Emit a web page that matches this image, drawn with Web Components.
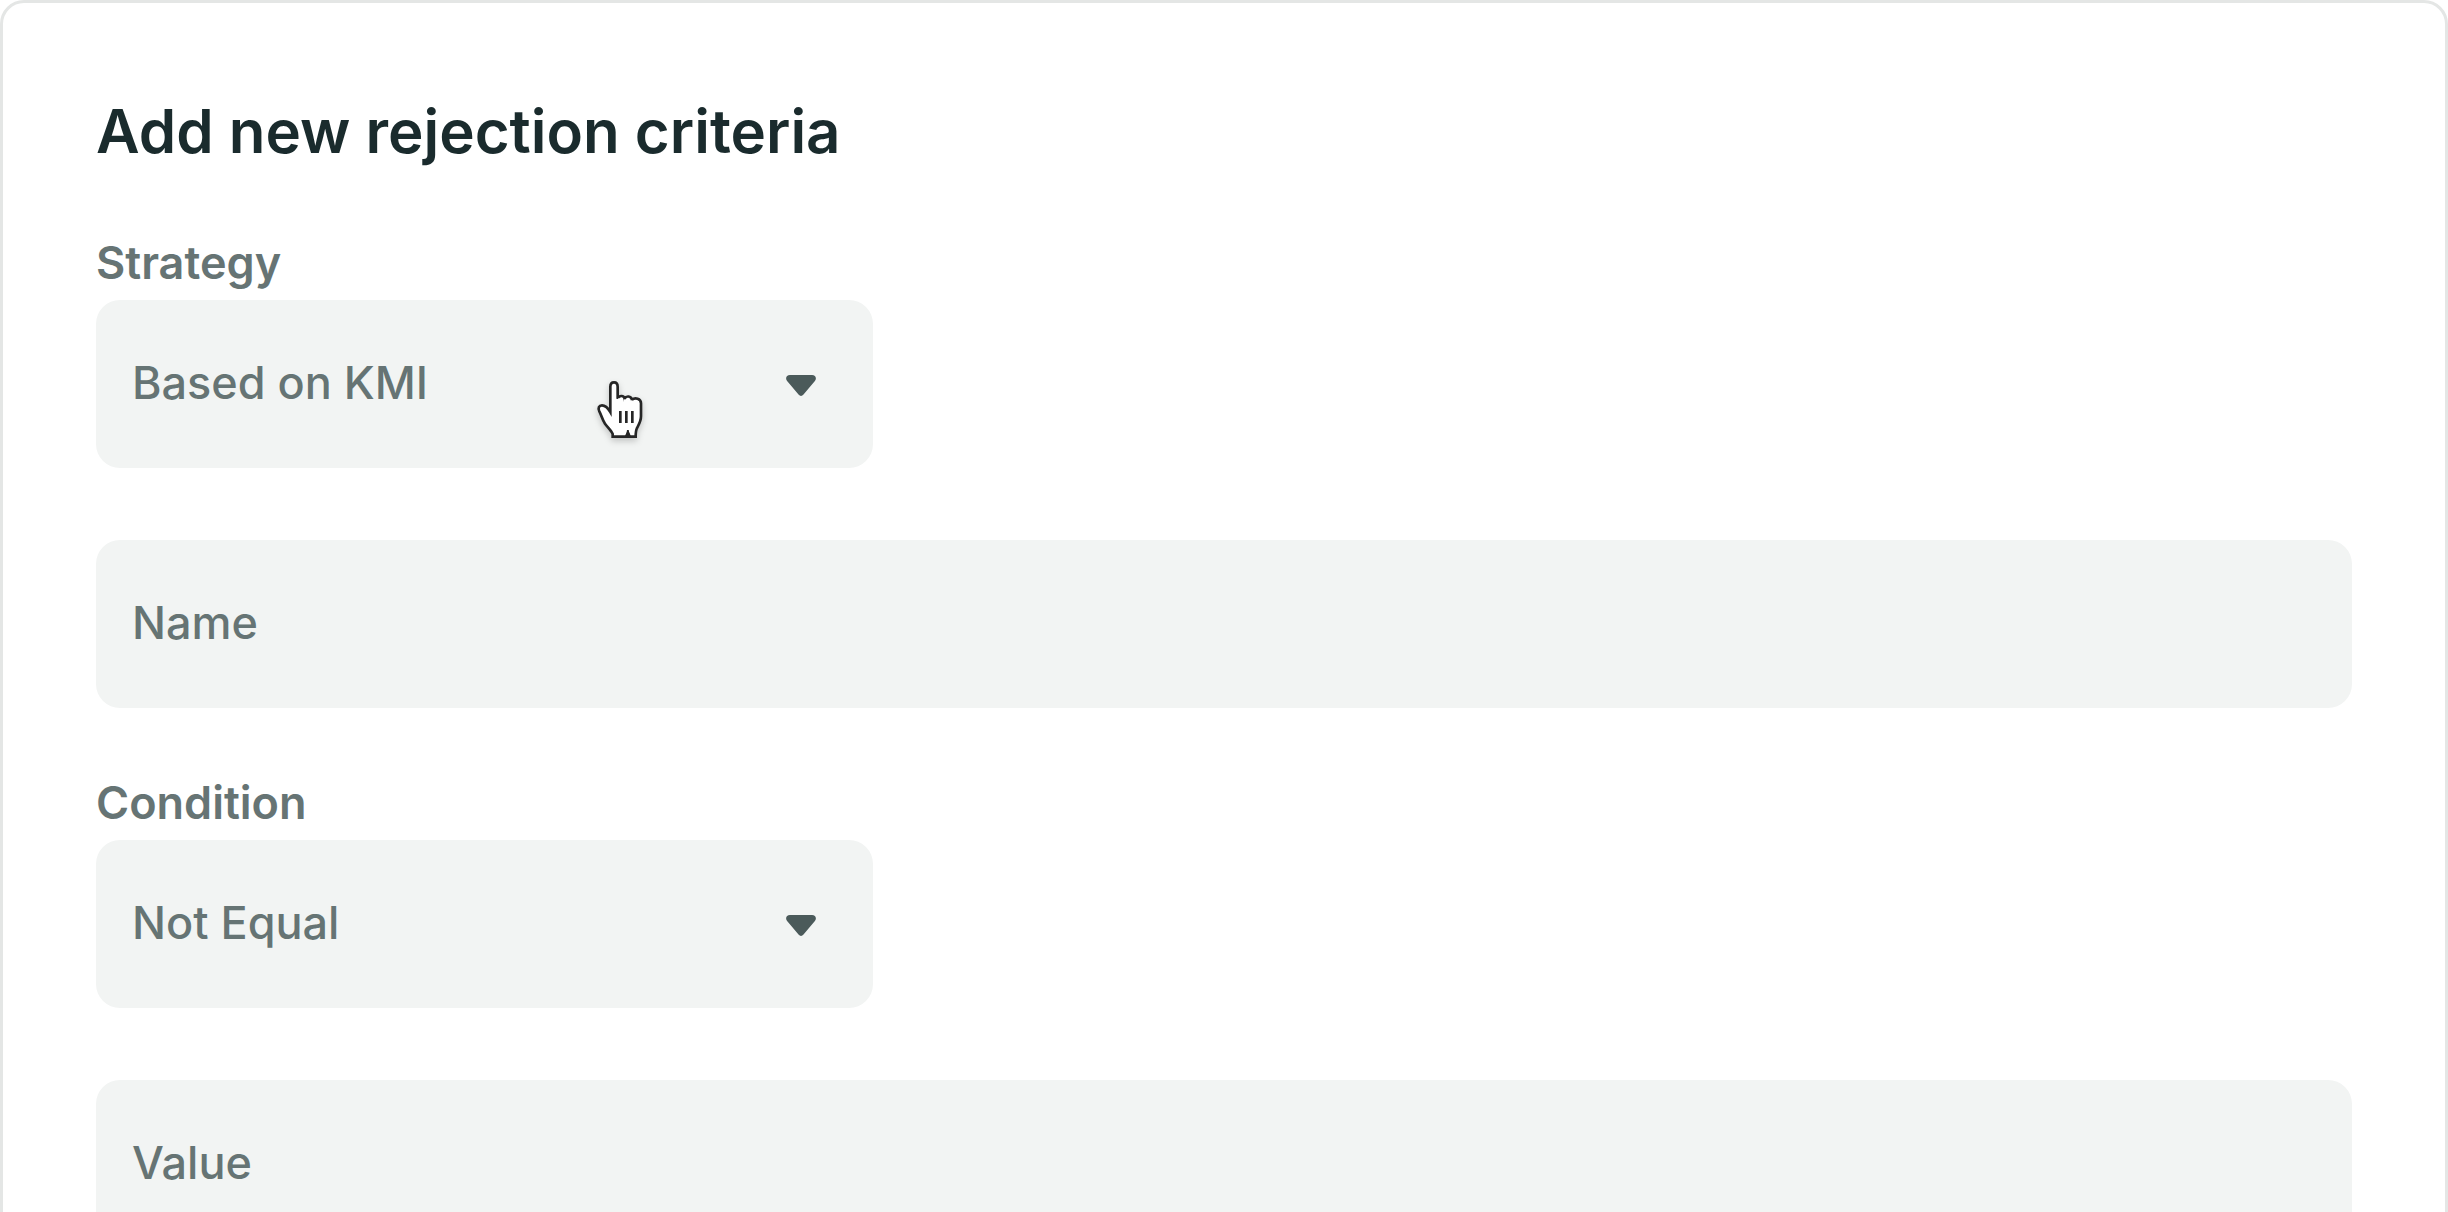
<!DOCTYPE html>
<html lang="en">
<head>
<meta charset="utf-8">
<title>Add new rejection criteria</title>
<style>
  html { height: 100%; overflow: hidden; background: #fff; }
  body {
    margin: 0;
    font-family: Inter, "Liberation Sans", sans-serif;
    --ink: #1a2b2d;
    --muted: #667474;
    --field: #f2f4f3;
    --line: #e4e6e5;
    --arrow: #4b5a5a;
  }
</style>
</head>
<body>
<criteria-card>
  <span slot="title">Add new rejection criteria</span>
  <select-field label="Strategy" options="Based on KMI|Based on value">
    <hand-pointer></hand-pointer>
  </select-field>
  <text-field label="Name"></text-field>
  <select-field label="Condition" options="Not Equal|Equal"></select-field>
  <text-field label="Value"></text-field>
</criteria-card>

<script>
class CriteriaCard extends HTMLElement {
  constructor() {
    super();
    this.attachShadow({ mode: "open" }).innerHTML = `
      <style>
        :host { display: block; }
        form {
          display: flex; flex-direction: column; gap: 72px;
          padding: 93px; border: 3px solid var(--line); border-radius: 24px; background: #fff;
        }
        h1 { margin: 0 0 2px; font-size: 60px; line-height: 70px; font-weight: 600; color: var(--ink); }
      </style>
      <form><h1><slot name="title"></slot></h1><slot></slot></form>`;
  }
}

class SelectField extends HTMLElement {
  connectedCallback() {
    if (this.shadowRoot) return;
    this.attachShadow({ mode: "open" }).innerHTML = `
      <style>
        :host { display: flex; flex-direction: column; align-items: flex-start; gap: 14px; }
        label { font-size: 45px; line-height: 46px; font-weight: 600; color: var(--muted); }
        .box { position: relative; display: grid; align-items: center; width: 777px; max-width: 100%; }
        select, svg { grid-area: 1 / 1; }
        select {
          appearance: none; box-sizing: border-box; width: 100%; height: 168px; margin: 0;
          padding: 0 93px 2px 36px; border: 0; border-radius: 24px; background: var(--field);
          font: 450 45px/60px Inter, "Liberation Sans", sans-serif; color: var(--muted); cursor: pointer;
        }
        svg { justify-self: end; margin-right: 57px; fill: var(--arrow); pointer-events: none; }
        ::slotted(*) { position: absolute; left: 498px; top: 78px; }
      </style>
      <label for="control"></label>
      <div class="box">
        <select id="control"></select>
        <svg width="30" height="24" viewBox="0 0 30 24" aria-hidden="true">
          <path d="M4 3H26C29.6 3 31 6.4 28.9 9L17.5 22.6C16 24.4 14 24.4 12.5 22.6L1.1 9C-1 6.4 .4 3 4 3Z"/>
        </svg>
        <slot></slot>
      </div>`;
    this.shadowRoot.querySelector("label").textContent = this.getAttribute("label");
    const select = this.shadowRoot.querySelector("select");
    for (const text of this.getAttribute("options").split("|")) select.add(new Option(text));
  }
}

class TextField extends HTMLElement {
  connectedCallback() {
    if (this.shadowRoot) return;
    this.attachShadow({ mode: "open" }).innerHTML = `
      <style>
        :host { display: block; }
        input {
          display: block; box-sizing: border-box; width: 100%; height: 168px; margin: 0;
          padding: 0 36px 4px; border: 0; border-radius: 24px; background: var(--field);
          font: 450 45px/60px Inter, "Liberation Sans", sans-serif; color: var(--ink);
        }
        input::placeholder { color: var(--muted); opacity: 1; }
      </style>
      <input type="text">`;
    const input = this.shadowRoot.querySelector("input");
    input.placeholder = this.getAttribute("label");
    input.setAttribute("aria-label", this.getAttribute("label"));
  }
}

class HandPointer extends HTMLElement {
  constructor() {
    super();
    this.attachShadow({ mode: "open" }).innerHTML = `
      <style>
        :host { display: block; pointer-events: none; }
        svg { display: block; overflow: visible; filter: drop-shadow(0 3px 3px rgb(0 0 0 / .2)); }
      </style>
      <svg width="52" height="64" viewBox="72 54 156 192" aria-hidden="true">
        <path fill="#fff" stroke="#262626" stroke-width="8" stroke-linejoin="miter"
          d="M128 230V222C124 211 112 201 105 191C97 180 94 165 88 154C83 144 87 136 96 136C106 136 114 144 121 156V80C121 71 125 67 132 67C139 67 143 72 143 80V116C148 105 162 106 164 116C169 106 183 108 186 119C195 112 213 115 213 130V169C213 184 207 193 201 204C197 212 197 219 197 230H179L174 219L168 230Z"/>
        <path fill="none" stroke="#fff" stroke-width="8" stroke-linecap="round" d="M147 119V126M165 122V128M185 125V130"/>
        <path fill="#262626" d="M165 234C167 226 170 219 171 210H176C177 219 181 226 183 234Z"/>
        <path fill="none" stroke="#262626" stroke-width="8" d="M151 153V189M169 153V189M187 153V189"/>
      </svg>`;
  }
}

customElements.define("criteria-card", CriteriaCard);
customElements.define("select-field", SelectField);
customElements.define("text-field", TextField);
customElements.define("hand-pointer", HandPointer);
</script>
</body>
</html>
